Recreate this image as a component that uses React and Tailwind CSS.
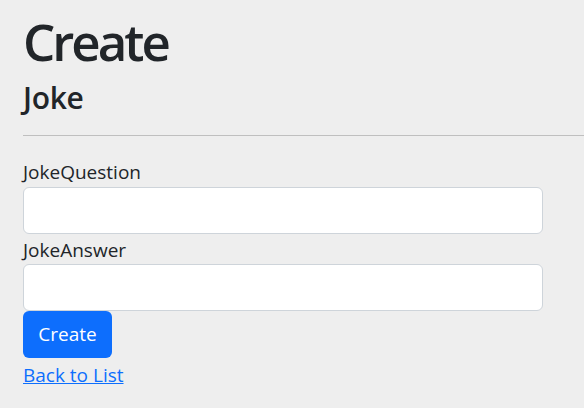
import React from "react";

const CreateJoke = () => {
  return (
    <div className="min-h-screen bg-[#eeeeee] text-[#212529] font-['Open_Sans',sans-serif]">
      <div className="pl-[23px] pt-[11px]">
        <h1 className="text-[51px] leading-[1.2] font-semibold tracking-[-3px]">Create</h1>
        <h4 className="mt-[8px] text-[30px] leading-[1.2] font-semibold tracking-[-0.3px]">Joke</h4>
        <hr className="mt-[19px] border-t border-[#bfbfbf]" />
        <form className="mt-[22px] w-[520px]">
          <div>
            <label className="block text-[19px] leading-[1.5]">JokeQuestion</label>
            <input
              type="text"
              className="block w-full h-[47px] bg-white border border-[#ced4da] rounded-[6px] px-3"
            />
          </div>
          <div className="mt-[2px]">
            <label className="block text-[19px] leading-[1.5]">JokeAnswer</label>
            <input
              type="text"
              className="block w-full h-[47px] bg-white border border-[#ced4da] rounded-[6px] px-3"
            />
          </div>
          <button
            type="button"
            className="block h-[47px] w-[89px] bg-[#0d6efd] text-white text-[19px] rounded-[6px]"
          >
            Create
          </button>
        </form>
        <a href="#" className="inline-block mt-[3px] text-[19px] leading-[1.5] text-[#0d6efd] underline">
          Back to List
        </a>
      </div>
    </div>
  );
};

export default CreateJoke;
